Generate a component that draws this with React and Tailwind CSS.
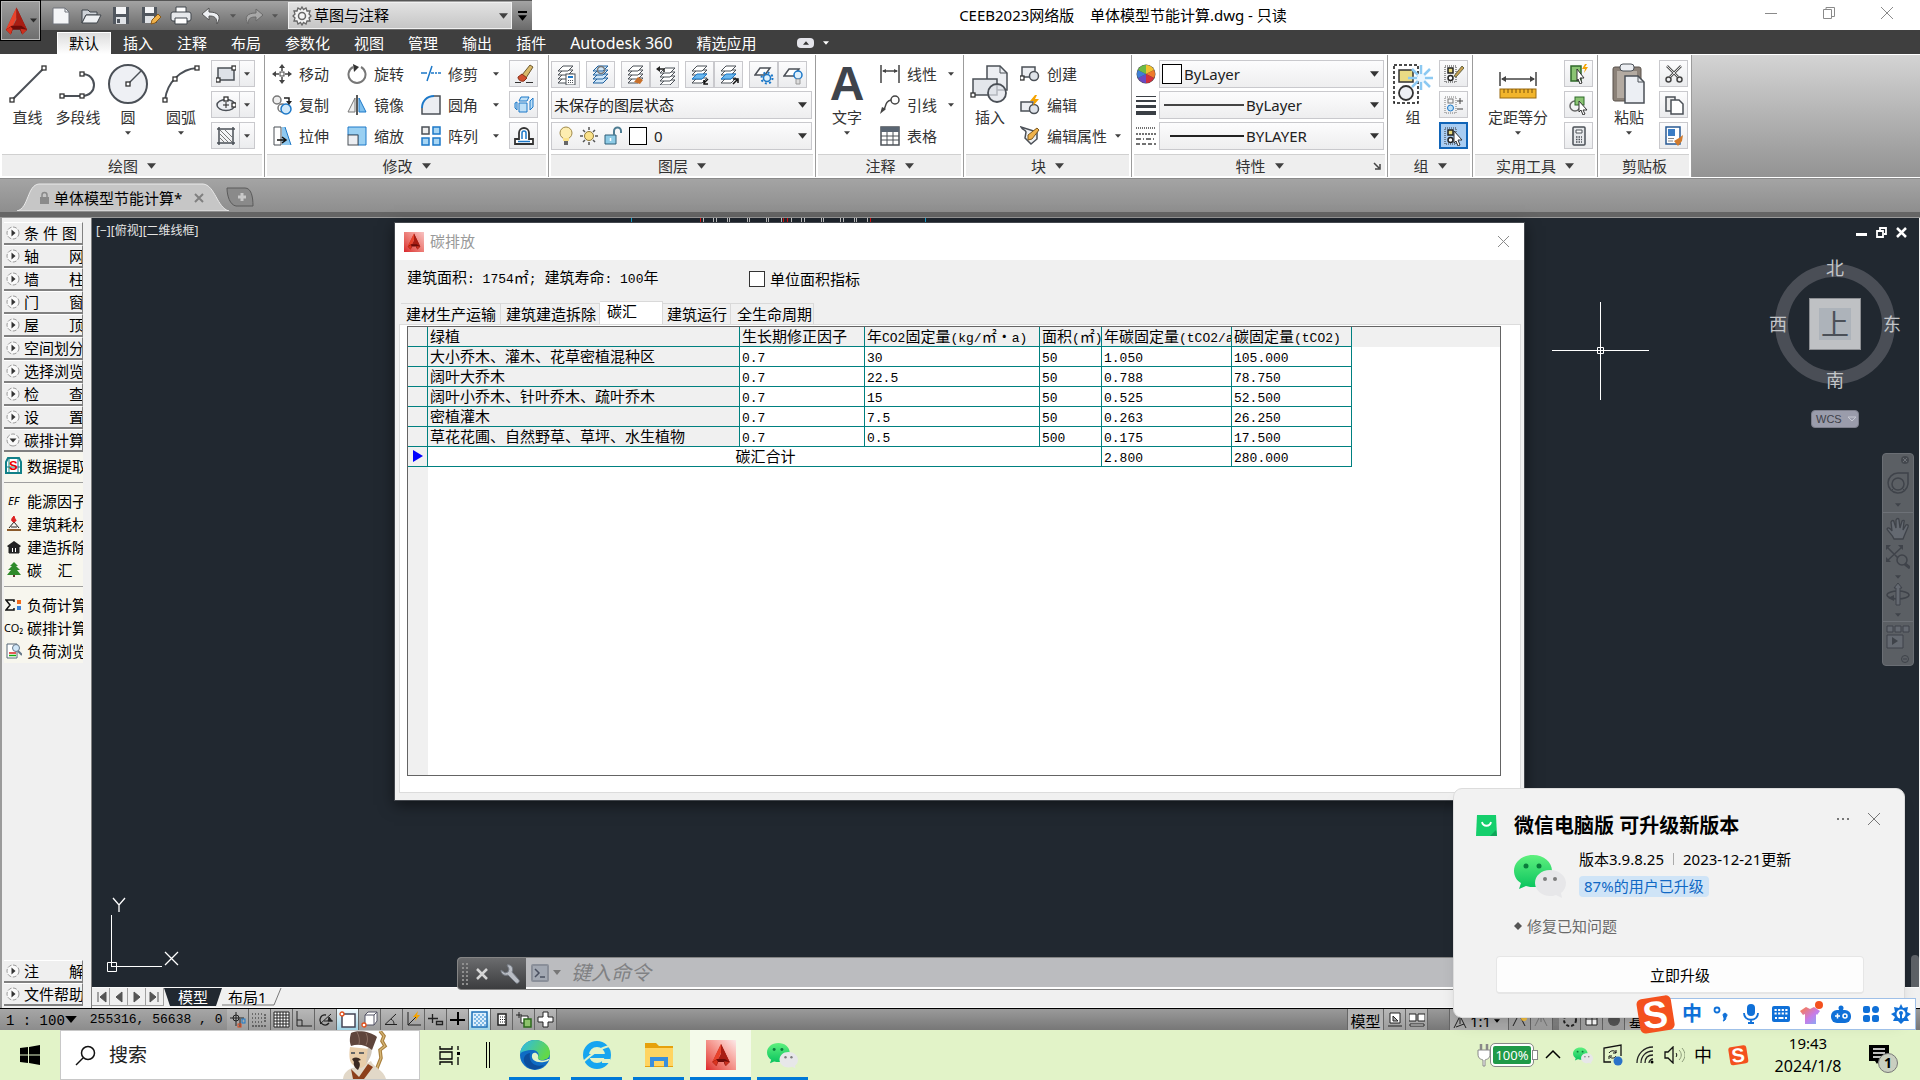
import React from "react";

const UI = "font-['Noto_Sans','Noto_Sans_CJK_SC',sans-serif]";
const MONO = "font-['Liberation_Mono','Noto_Sans_CJK_SC',monospace]";

function Svg({ w = 20, h, box, className = "", children }) {
  const hh = h || w;
  return (
    <svg width={w} height={hh} viewBox={box || `0 0 ${w} ${hh}`} fill="none" className={`shrink-0 ${className}`} aria-hidden="true">
      {children}
    </svg>
  );
}

function Caret({ w = 7, className = "text-[#404040]" }) {
  return (
    <svg width={w} height={Math.ceil(w / 2) + 1} viewBox="0 0 10 6" className={`shrink-0 ${className}`} aria-hidden="true">
      <path d="M0 0h10L5 6z" fill="currentColor" />
    </svg>
  );
}

/* Half-width runs are set in a mono face a step smaller than the ideographs. */
function Song({ t }) {
  return t.split(/([\x20-\x7e]+)/).map((p, i) =>
    /^[\x20-\x7e]+$/.test(p) ? (
      <span key={i} className="font-['Liberation_Mono',monospace] text-[13px] whitespace-pre">{p}</span>
    ) : (
      <span key={i} className="font-['Noto_Sans_CJK_SC',sans-serif]">{p}</span>
    )
  );
}

function AcadA({ w = 28, h = 30 }) {
  return (
    <Svg w={w} h={h} box="0 0 28 30">
      <path d="M14 1 3 24l6 4 5-27z" fill="#c32a1c" />
      <path d="M14 1 3 24l7-4 4-8z" fill="#e8432c" />
      <path d="M14 1l11 23-6 4-5-16z" fill="#8c120c" />
      <path d="M14 1v12l-4 8h9l6 3z" fill="#a81d13" />
      <path d="M9 20h10l6 4-5 5-2-5H10l-2 5-5-5z" fill="#6d0b08" />
      <path d="M3 24l5 5 2-6-2-2z" fill="#d8341f" />
      <path d="M25 24l-5 5-2-6z" fill="#c8301f" />
    </Svg>
  );
}

/* ---------- title bar ---------- */

const quick = [
  <Svg w={22} key="new"><path d="M3 3h12l4 4v12H3z" fill="#f4f5f7" stroke="#70757c" /><path d="M15 3v4h4" stroke="#70757c" /></Svg>,
  <Svg w={22} key="open"><path d="M2 5h6l2 2h7v3H6l-4 8z" fill="#cfd3d8" stroke="#3f444a" /><path d="M6 10h15l-4 8H2z" fill="#eef0f2" stroke="#3f444a" /></Svg>,
  <Svg w={22} key="save"><path d="M3 2h16v17H3z" fill="#50565e" /><path d="M6 2h10v7H6z" fill="#f4f5f7" /><path d="M6 12h10v7H6z" fill="#dfe2e6" /><path d="M7 14h3v4H7z" fill="#50565e" /></Svg>,
  <Svg w={22} key="saveas"><path d="M2 2h15v16H2z" fill="#50565e" /><path d="M5 2h9v6H5z" fill="#f4f5f7" /><path d="M5 11h9v7H5z" fill="#dfe2e6" /><path d="M11 19l1-4 6-6 3 3-6 6z" fill="#f0b24a" stroke="#8b5a18" /></Svg>,
  <Svg w={22} key="print"><path d="M6 2h10v6H6z" fill="#fff" stroke="#3f444a" /><rect x="1" y="7" width="20" height="9" rx="2" fill="#e6e8eb" stroke="#3f444a" /><path d="M5 13h12v6H5z" fill="#fff" stroke="#3f444a" /></Svg>,
  <Svg w={22} key="undo"><path d="M9 3 2 9l7 6v-4c5 0 8 1 8 8 5-8 1-12-8-12z" fill="#eef0f3" stroke="#555" /></Svg>,
];

function TitleBar() {
  return (
    <header className="relative flex h-[30px] bg-white">
      <div className="flex h-[30px] w-[532px] shrink-0 items-center border-t border-[#555] bg-gradient-to-b from-[#a3a3a3] to-[#6a6a6a] pl-[50px]">
        <div className="flex items-center gap-[8px]">
          {quick.map((q, i) => <button key={i} className="h-[22px] w-[22px]" aria-label="快速访问">{q}</button>)}
          <Caret w={6} className="text-[#555]" />
          <button aria-label="重做"><Svg w={20}><path d="M12 3l7 6-7 6v-4c-5 0-8 1-8 7-4-7-1-11 8-11z" fill="#a8a8a8" stroke="#6a6a6a" /></Svg></button>
          <Caret w={6} className="text-[#555]" />
        </div>
        <label className="relative ml-auto flex h-[27px] w-[224px] items-center border border-[#f0f0f0] bg-gradient-to-b from-[#e2e2e2] to-[#c6c6c6] pl-[3px]">
          <Svg w={20}><path d="M10 1l1.500 2.500L14 2l1 3 3 0-1 3 2 2-2 2 1 3h-3l-1 3-2.500-1.500L10 19l-1.500-2.500L6 18l-1-3H2l1-3-2-2 2-2-1-3h3l1-3 2.500 1.500z" fill="#f4f4f4" stroke="#666" strokeWidth="1.300" /><circle cx="10" cy="10" r="3.500" stroke="#666" strokeWidth="1.500" /></Svg>
          <select className="absolute inset-0 appearance-none bg-transparent pl-[25px] text-[15px] text-black outline-none" defaultValue="a" aria-label="工作空间"><option value="a">草图与注释</option></select>
          <Caret w={9} className="ml-auto mr-[3px] text-[#404040]" />
        </label>
        <button className="flex h-[28px] w-[20px] flex-col items-center justify-center gap-[2px] text-black" aria-label="自定义"><span className="h-[2px] w-[9px] bg-black" /><Caret w={9} className="text-black" /></button>
      </div>
      <h1 className="flex-1 self-center whitespace-pre pr-[28px] text-center text-[15px] leading-5 text-black">{"CEEB2023网络版    单体模型节能计算.dwg - 只读"}</h1>
      <div className="mr-[4px] flex w-[174px] shrink-0 pb-1 text-[#8a8a8a]">
        <button className="flex flex-1 items-center justify-center" aria-label="最小化"><Svg w={14}><path d="M1 7.500h12" stroke="currentColor" /></Svg></button>
        <button className="flex flex-1 items-center justify-center" aria-label="还原"><Svg w={14}><path d="M1.500 3.500h8v9h-8zM4 3V1.500h8.500v9H10" stroke="currentColor" /></Svg></button>
        <button className="flex flex-1 items-center justify-center" aria-label="关闭"><Svg w={14}><path d="M1 1l12 12M13 1 1 13" stroke="currentColor" /></Svg></button>
      </div>
      <button className="absolute left-0 top-0 z-10 flex h-[41px] w-[41px] items-center border border-black bg-gradient-to-b from-[#9d9d9d] to-[#6d6d6d] pl-[2px] shadow-[inset_0_0_0_1px_#b8b8b8]" aria-label="应用程序菜单">
        <AcadA w={27} h={30} />
        <Caret w={7} className="text-[#2b2b2b]" />
      </button>
    </header>
  );
}

/* ---------- ribbon ---------- */

const tabs = ["插入", "注释", "布局", "参数化", "视图", "管理", "输出", "插件", "Autodesk 360", "精选应用"];

function RibbonTabs() {
  return (
    <nav className="flex h-6 items-end bg-[#3f3f3f] pl-[57px] text-[15px] leading-[21px] text-white">
      <button className="h-[22px] border border-b-0 border-white bg-gradient-to-b from-[#dcdcdc] to-white px-[11px] text-black">默认</button>
      {tabs.map((t) => <button key={t} className={t.startsWith("A") ? "h-[22px] px-3 text-[16px]" : "h-[22px] px-3"}>{t}</button>)}
      <button className="ml-[29px] flex h-[22px] items-center gap-[9px]" aria-label="最小化功能区">
        <span className="flex h-[10px] w-[17px] items-center justify-center rounded-sm bg-[#e4e4ea]"><Caret w={6} className="rotate-180 text-[#333]" /></span>
        <Caret w={6} className="text-white" />
      </button>
    </nav>
  );
}

function Panel({ title, width, caret = true, launcher, children }) {
  return (
    <section className={`flex shrink-0 flex-col border-r border-[#9c9c9c] bg-white ${width}`}>
      <div className="flex flex-1 pt-[3px]">{children}</div>
      <div className="relative mx-[2px] mb-[1px] flex h-[22px] items-center justify-center gap-[9px] border-t border-[#d0d0d0] bg-[#eeeeee] text-[15px] leading-5 text-[#333]">
        {title}
        {caret && <Caret w={9} />}
        {launcher && <Svg w={8} className="absolute right-1"><path d="M1 1l5 5M7 2v5H2" stroke="#444" strokeWidth="1.500" /></Svg>}
      </div>
    </section>
  );
}

function Big({ icon, label, caret, className = "" }) {
  return (
    <button className={`flex shrink-0 flex-col items-center text-[15px] leading-5 whitespace-nowrap text-[#333] ${className}`}>
      <span className="flex h-[49px] items-center justify-center pt-[2px]">{icon}</span>
      <span>{label}</span>
      {caret && <Caret w={6} className="mt-[4px] text-[#404040]" />}
    </button>
  );
}

function Row({ icon, label, caret }) {
  return (
    <button className="flex h-[31px] items-center gap-[7px] text-[15px] leading-5 whitespace-nowrap text-[#333]">
      {icon}{label}{caret && <Caret w={6} className="ml-auto text-[#404040]" />}
    </button>
  );
}

const boxed = "flex h-[27px] items-center justify-center border border-[#c9c9cd] bg-gradient-to-b from-[#fcfcfd] to-[#ebecee]";

function Sq({ children, on, w = "w-[29px]", label }) {
  return <button aria-label={label} className={on ? `${w} flex h-[27px] items-center justify-center border-2 border-[#1165b8] bg-[#a9cdf2]` : `${boxed} ${w}`}>{children}</button>;
}

const node = (x, y) => <rect x={x - 2} y={y - 2} width="4" height="4" fill="#fff" stroke="#333" strokeWidth="1.300" key={x + "-" + y} />;

const G = "#4b5057";
const B = "#1c78c8";

const LayerBase = ({ c = "#fff", s = G }) => (
  <>
    <path d="M7 13h10l-5 5H2z" fill={c} stroke={s} />
    <path d="M7 9h10l-5 5H2z" fill={c} stroke={s} />
    <path d="M7 5h10l-5 5H2z" fill={c} stroke={s} />
    <path d="M7 1h10l-5 5H2z" fill={c} stroke={s} />
  </>
);

function Split({ children, label }) {
  return (
    <div className="flex">
      <Sq label={label}>{children}</Sq>
      <button aria-label={label + "选项"} className={`${boxed} -ml-px w-4`}><Caret w={6} /></button>
    </div>
  );
}

function Draw() {
  return (
    <Panel title="绘图" width="w-[265px]">
      <Big className="w-[55px]" label="直线" icon={<Svg w={40}><path d="M4 36 36 4" stroke={G} strokeWidth="2" />{node(4, 36)}{node(36, 4)}</Svg>} />
      <Big className="w-[46px]" label="多段线" icon={<Svg w={40}><path d="M4 32h20c16 0 16-22 0-22" stroke={G} strokeWidth="2" />{node(4, 32)}{node(24, 32)}{node(24, 10)}</Svg>} />
      <Big className="w-[54px]" label="圆" caret icon={<Svg w={42}><circle cx="21" cy="21" r="19" fill="#eef0f4" stroke={G} strokeWidth="2" /><path d="m21 21 13-13" stroke={G} strokeWidth="1.500" />{node(21, 21)}</Svg>} />
      <Big className="w-[52px]" label="圆弧" caret icon={<Svg w={40}><path d="M4 36C6 18 20 5 36 4" stroke={G} strokeWidth="2" />{node(4, 36)}{node(14, 15)}{node(36, 4)}</Svg>} />
      <div className="ml-[4px] flex flex-col gap-1 pt-[2px]">
        <Split label="矩形"><Svg w={20}><rect x="2" y="4" width="16" height="12" fill="#dde1e7" stroke={G} strokeWidth="1.500" />{node(2, 16)}{node(18, 4)}</Svg></Split>
        <Split label="椭圆"><Svg w={20}><ellipse cx="10" cy="10" rx="9" ry="5.500" fill="#eef0f4" stroke={G} strokeWidth="1.500" /><path d="M7 10h6M10 7v6" stroke="#222" />{node(18, 10)}{node(10, 4)}</Svg></Split>
        <Split label="图案填充"><Svg w={20}><path d="M1 3h18M1 17h18M3 1v18M17 1v18" stroke={G} strokeWidth="1.500" /><path d="m4 8 8 8M4 4l12 12M9 4l7 7M4 12l4 4" stroke="#777" /></Svg></Split>
      </div>
    </Panel>
  );
}

function Modify() {
  return (
    <Panel title="修改" width="w-[284px]">
      <div className="ml-[7px] flex w-[75px] flex-col">
        <Row label="移动" icon={<Svg><path d="M10 0l3 4H7zM10 20l3-4H7zM0 10l4-3v6zM20 10l-4-3v6z" fill="#444" /><path d="M10 3v4M10 13v4M3 10h4M13 10h4" stroke="#444" strokeWidth="1.500" /><rect x="8" y="8" width="4" height="4" stroke="#444" /></Svg>} />
        <Row label="复制" icon={<Svg><circle cx="5" cy="5" r="4" stroke="#777" strokeWidth="1.500" fill="#eee" /><circle cx="10" cy="13" r="4" stroke="#777" strokeWidth="1.500" fill="#fff" /><circle cx="14" cy="14" r="5" stroke={B} strokeWidth="1.500" fill="#cfe8fa" /><path d="M12 3h5v4" stroke="#222" strokeWidth="1.500" /><path d="M14 6h6l-3 4z" fill="#222" /></Svg>} />
        <Row label="拉伸" icon={<Svg><path d="M2 1h7v18H2z" fill="#fff" stroke={G} /><path d="M10 1h3l6 18h-9z" fill="#8fc8ef" /><path d="M13 1l6 18" stroke={B} /><path d="M5 14h8M10 11l4 3-4 3" stroke="#111" strokeWidth="1.500" /></Svg>} />
      </div>
      <div className="flex w-[74px] flex-col">
        <Row label="旋转" icon={<Svg><path d="M6 3a8.500 8.500 0 1 0 8 0" stroke="#777" strokeWidth="2" /><path d="M6 0l6 3-5 5z" fill="#333" /></Svg>} />
        <Row label="镜像" icon={<Svg><path d="M8 3v14H1z" fill="#eee" stroke="#777" /><path d="M12 3v14h7z" fill="#7fc0ee" stroke={B} /><path d="M10 0v20" stroke="#222" strokeWidth="1.500" /></Svg>} />
        <Row label="缩放" icon={<Svg><path d="M1 1h18v18h-8V9H1z" fill="#9ad0f2" stroke={B} /><rect x="1" y="9" width="10" height="10" fill="#eceef2" stroke={G} /></Svg>} />
      </div>
      <div className="flex w-[78px] flex-col">
        <Row label="修剪" caret icon={<Svg><path d="M0 9h6M10 9h3M14 9h2M17 9h3" stroke={B} strokeWidth="1.500" /><path d="M11 2 6 17" stroke={B} strokeWidth="1.500" /></Svg>} />
        <Row label="圆角" caret icon={<Svg><path d="M19 19H1V11C2 4 7 1 13 1h6z" fill="#eceef2" /><path d="M13 1h6v18H1v-6" stroke={G} strokeWidth="1.500" /><path d="M1 13C1 6 6 1 13 1" stroke={B} strokeWidth="2" /></Svg>} />
        <Row label="阵列" caret icon={<Svg><rect x="1" y="1" width="7" height="7" fill="#eee" stroke={G} strokeWidth="1.500" /><g fill="#a8d6f4" stroke={B} strokeWidth="1.500"><rect x="12" y="1" width="7" height="7" /><rect x="1" y="12" width="7" height="7" /><rect x="12" y="12" width="7" height="7" /></g></Svg>} />
      </div>
      <div className="ml-[10px] flex flex-col gap-1 pt-[2px]">
        <Sq label="删除"><Svg><path d="M8 11 16 1l3 2-7 11z" fill="#d9b96a" stroke="#6e5a30" /><path d="M4 13l4-3 5 4-3 3c-3 1-6-1-6-4z" fill="#d1502f" stroke="#8a3018" /><path d="M1 18.500h6M12 18.500h7" stroke="#333" /></Svg></Sq>
        <Sq label="分解"><Svg><g fill="#bfe0f7" stroke={B}><path d="M5 8h8v9H5zM7 2h8l-2 4H5z" /><path d="M16 6l3-3v9l-3 3zM1 8l2-1v8l-2-2z" /></g></Svg></Sq>
        <Sq label="偏移"><Svg><path d="M1 18h18v-5h-4V7a5 5 0 0 0-10 0v6H1z" fill="#fff" stroke="#333" strokeWidth="1.800" /><path d="M4 15.500h12" stroke={B} strokeWidth="1.500" /><path d="M8 13V7a2 2 0 0 1 4 0v6" stroke={B} strokeWidth="1.500" /></Svg></Sq>
      </div>
    </Panel>
  );
}

function Select({ value, label, pre = "pl-2", children, className = "" }) {
  return (
    <label className={`relative flex h-[28px] items-center border border-[#c9c9cd] bg-gradient-to-b from-[#fcfcfd] to-[#eeeeef] ${className}`}>
      {children}
      <select aria-label={label} defaultValue="v" className={`absolute inset-0 w-full appearance-none bg-transparent text-[15px] text-[#222] outline-none ${pre}`}><option value="v">{value}</option></select>
      <Caret w={9} className="ml-auto mr-[4px] text-[#333]" />
    </label>
  );
}

function Layers() {
  return (
    <Panel title="图层" width="w-[267px]">
      <div className="ml-[2px] flex w-[261px] flex-col gap-[3px] pt-[3px]">
        <div className="flex gap-[6px]">
          <Sq label="图层特性"><Svg><LayerBase /><rect x="10" y="9" width="9" height="11" fill="#fff" stroke={G} /><path d="M12 11h5v2h-5z" fill={B} /><path d="M12 15.500h5M12 17.500h5" stroke={G} strokeDasharray="1 1" /></Svg></Sq>
          <Sq label="图层匹配"><Svg><LayerBase c="#cfe6f8" s="#1d5f9c" /><circle cx="10" cy="5" r="3.500" stroke="#777" strokeWidth="1.500" /></Svg></Sq>
          <div className="flex">
            <Sq label="置为当前"><Svg><LayerBase /><path d="M12 12l5 3-3 4-6-2z" fill="#c8702a" /></Svg></Sq>
            <Sq label="上一个"><Svg><g transform="translate(3 2)"><LayerBase /></g><path d="M2 4h7v3" stroke="#222" strokeWidth="1.500" /><path d="M5 1v6L1 4z" fill="#222" /></Svg></Sq>
          </div>
          <div className="flex">
            <Sq label="隔离"><Svg><LayerBase /><path d="M7 9h10l-5 5H2z" fill="#6cb8ee" stroke={B} /><path d="m18 14-4 4M14 15v4h4" stroke="#111" strokeWidth="1.500" /></Svg></Sq>
            <Sq label="取消隔离"><Svg><LayerBase /><path d="M7 9h10l-5 5H2z" fill="#6cb8ee" stroke={B} /><path d="m14 19 4-4M14 14h5v4" stroke="#111" strokeWidth="1.500" /></Svg></Sq>
          </div>
          <div className="flex">
            <Sq label="冻结"><Svg><path d="M6 3h10l-5 7H1z" fill="#fff" stroke={G} strokeWidth="1.500" /><circle cx="13" cy="13" r="3.500" fill="#dff0fb" stroke={B} strokeWidth="1.500" /><circle cx="13" cy="13" r="5.500" stroke={B} strokeWidth="2" strokeDasharray="2 2.300" /></Svg></Sq>
            <Sq label="关闭图层"><Svg><path d="M6 4h10l-5 7H1z" fill="#fff" stroke={G} strokeWidth="1.500" /><circle cx="15" cy="10" r="4" fill="#dff0fb" stroke={B} strokeWidth="1.500" /><path d="M13 14h4v5h-4z" fill="#ddd" stroke="#999" /></Svg></Sq>
          </div>
        </div>
        <Select label="图层状态" value="未保存的图层状态" pre="pl-[2px]" />
        <Select label="图层" value="0" pre="pl-[102px]">
          <span className="flex items-center gap-[6px] pl-[6px]">
            <Svg w={16} h={20}><circle cx="8" cy="7" r="6" fill="#fdedb0" stroke="#a08a4a" /><path d="M5 12h6v3H5z" fill="#fbe28a" /><path d="M6 15h4v4H6z" fill="#666" /></Svg>
            <Svg w={18}><circle cx="9" cy="9" r="4.500" fill="#fbe28a" stroke="#8f7a3a" /><path d="M9 0v3M9 15v3M0 9h3M15 9h3M3 3l2 2M13 13l2 2M15 3l-2 2M3 15l2-2" stroke="#555" strokeWidth="1.500" /></Svg>
            <Svg w={19} h={20}><path d="M1 9h11v9H1z" fill="#8ecbe6" stroke="#2f5f78" /><path d="M10 9V5a3.500 3.500 0 0 1 7 0v2" stroke="#4d7c92" strokeWidth="2" /><path d="M6.500 12v3" stroke="#fff" strokeWidth="1.500" /></Svg>
            <span className="h-[18px] w-[18px] border border-black bg-white" />
          </span>
        </Select>
      </div>
    </Panel>
  );
}

function Annotate() {
  return (
    <Panel title="注释" width="w-[148px]">
      <Big className="ml-[3px] w-[56px]" label="文字" caret icon={<span className="font-['Liberation_Sans',sans-serif] text-[48px] leading-[42px] font-bold text-[#3f444c]">A</span>} />
      <div className="ml-[5px] flex w-[74px] flex-col">
        <Row label="线性" caret icon={<Svg><path d="M1 1v18M19 1v18" stroke="#444" strokeWidth="1.500" /><path d="M3 7h14" stroke="#444" strokeWidth="1.500" /><path d="M2 7l4-2v4zM18 7l-4-2v4z" fill="#444" /></Svg>} />
        <Row label="引线" caret icon={<Svg><circle cx="15" cy="5" r="4" stroke="#444" strokeWidth="1.500" /><path d="M11 5C6 6 6 10 4 15" stroke="#444" strokeWidth="1.500" /><path d="M0 19l2-7 4 2z" fill="#444" /></Svg>} />
        <Row label="表格" icon={<Svg><rect x="1" y="1" width="18" height="18" fill="#fff" stroke={G} strokeWidth="1.500" /><path d="M1 1h18v5H1z" fill="#5a6572" /><path d="M1 10h18M1 14h18M7 6v13M13 6v13" stroke={G} /></Svg>} />
      </div>
    </Panel>
  );
}

function Block() {
  return (
    <Panel title="块" width="w-[168px]">
      <Big className="ml-[4px] w-[44px]" label="插入" icon={<Svg w={40}><path d="M17 2h13l7 7v17H17z" fill="#eceef2" stroke={G} strokeWidth="1.500" /><path d="M30 2v7h7" stroke={G} /><path d="M3 15h24v16H3z" fill="#e3e6eb" stroke={G} strokeWidth="1.500" /><circle cx="27" cy="29" r="9" stroke={G} strokeWidth="1.800" fill="#dfe3e9" fillOpacity=".7" />{node(3, 31)}</Svg>} />
      <div className="ml-[8px] flex w-[101px] flex-col">
        <Row label="创建" icon={<Svg><rect x="2" y="3" width="13" height="10" fill="#eceef2" stroke={G} strokeWidth="1.500" /><circle cx="14" cy="12" r="4.500" fill="#dfe3e9" stroke={G} strokeWidth="1.500" />{node(2, 14)}</Svg>} />
        <Row label="编辑" icon={<Svg><rect x="1" y="7" width="12" height="9" fill="#eceef2" stroke={G} strokeWidth="1.500" /><circle cx="14" cy="14" r="4.500" fill="#dfe3e9" stroke={G} strokeWidth="1.500" /><path d="m15 0-5 6h4l-1 5 6-7h-4l2-4z" fill="#f5a300" /></Svg>} />
        <Row label="编辑属性" caret icon={<Svg><path d="M1 1c2 4 4 2 5 5l-1 6 6 6 6-5V6z" fill="#eef0f2" stroke={G} strokeWidth="1.500" /><path d="m8 9 9-7 2 2-7 9-4 1z" fill="#f0b24a" stroke="#7d5a20" /></Svg>} />
      </div>
    </Panel>
  );
}

function Props() {
  return (
    <Panel title="特性" width="w-[256px]" launcher>
      <div className="ml-[4px] flex w-[248px] flex-col gap-[3px] pt-[2px]">
        <div className="flex items-center gap-[3px]">
          <Svg><circle cx="10" cy="10" r="9.500" fill="#444" /><path d="M10 10V1a9 9 0 0 1 8 5z" fill="#f2c12e" /><path d="M10 10l8-4a9 9 0 0 1 0 8z" fill="#ee7a2b" /><path d="M10 10l8 4a9 9 0 0 1-8 5z" fill="#d22f3c" /><path d="M10 10v9a9 9 0 0 1-8-5z" fill="#6a4ac2" /><path d="M10 10l-8 4a9 9 0 0 1 0-8z" fill="#3f7fd6" /><path d="M10 10L2 6a9 9 0 0 1 8-5z" fill="#6dbb45" /></Svg>
          <Select label="颜色" value="ByLayer" className="flex-1" pre="pl-[24px]"><span className="ml-[2px] h-5 w-5 border border-black bg-white" /></Select>
        </div>
        <div className="flex items-center gap-[3px]">
          <Svg><path d="M0 1h20v1H0zM0 5h20v2H0zM0 10h20v3H0zM0 16h20v4H0z" fill="#3a3f45" /></Svg>
          <Select label="线宽" value="ByLayer" className="flex-1" pre="pl-[86px]"><span className="ml-[4px] h-[2px] w-[80px] bg-[#444]" /></Select>
        </div>
        <div className="flex items-center gap-[3px]">
          <Svg><path d="M0 2h20" stroke="#444" strokeWidth="1.500" strokeDasharray="1 1" /><path d="M0 8h20" stroke="#444" strokeWidth="1.500" strokeDasharray="2 1" /><path d="M0 13h20" stroke="#444" strokeWidth="1.500" strokeDasharray="5 2 1 2" /><path d="M0 18h20" stroke="#444" strokeWidth="1.500" strokeDasharray="4 2" /></Svg>
          <Select label="线型" value="BYLAYER" className="flex-1" pre="pl-[86px]"><span className="ml-[10px] h-[2px] w-[74px] bg-[#222]" /></Select>
        </div>
      </div>
    </Panel>
  );
}

const GroupGlyph = () => <><rect x="1" y="2" width="11" height="16" stroke="#333" strokeDasharray="1 1" /><rect x="4" y="4" width="5" height="5" fill="#e9d979" stroke="#222" strokeWidth="1.500" /><circle cx="6.500" cy="14" r="2.500" fill="#fff" stroke="#222" strokeWidth="1.500" /></>;

function RightPanels() {
  return (
    <>
      <Panel title="组" width="w-[85px]">
        <Big className="ml-[4px] w-[44px] pr-[2px]" label="组" icon={<Svg w={42}><rect x="2" y="2" width="24" height="38" stroke="#111" strokeWidth="1.500" strokeDasharray="3 2" /><rect x="7" y="7" width="14" height="12" fill="#eadb84" stroke="#333" strokeWidth="1.500" /><circle cx="14" cy="30" r="7" fill="#eef0f4" stroke="#333" strokeWidth="1.800" /><path d="M29 2v10M29 18v9M16 15h10M32 15h9M20 6l6 6M38 6l-6 6M20 24l6-6M38 24l-6-6" stroke="#8cc9f2" strokeWidth="2.500" /><circle cx="29" cy="15" r="4" fill="#eaf6ff" /></Svg>} />
        <div className="ml-[3px] flex flex-col gap-1 pt-[2px]">
          <Sq label="编辑组"><Svg><GroupGlyph /><path d="M10 12 18 2l2 2-8 9z" fill="#c8a050" stroke="#664" /></Svg></Sq>
          <Sq label="组编辑"><Svg><rect x="1" y="2" width="11" height="16" stroke="#777" strokeDasharray="1 1" /><rect x="4" y="4" width="5" height="4" stroke="#777" /><circle cx="6.500" cy="13" r="3" fill="#bfe0f7" stroke={B} /><path d="M13 6h6M16 3v6M13 14h6" stroke="#444" /></Svg></Sq>
          <Sq label="组选择" on><Svg><GroupGlyph /><path d="m10 5 8 9h-4l2 5-2 1-2-5-2 2z" fill="#fff" stroke="#333" /></Svg></Sq>
        </div>
      </Panel>
      <Panel title="实用工具" width="w-[125px]">
        <Big className="ml-[13px] w-[64px]" label="定距等分" caret icon={<Svg w={38} h={40}><path d="M1 8v14M37 8v14M3 15h32" stroke="#444" strokeWidth="1.500" /><path d="M2 15l5-3v6zM36 15l-5-3v6z" fill="#444" /><rect x="1" y="25" width="36" height="9" fill="#f2b52c" stroke="#9a6a10" /><path d="M5 25v4M9 25v4M13 25v4M17 25v4M21 25v4M25 25v4M29 25v4M33 25v4" stroke="#7a520c" /></Svg>} />
        <div className="ml-[14px] flex flex-col gap-1 pt-[2px]">
          <Sq label="快速选择"><Svg><rect x="2" y="2" width="10" height="15" fill="#8bc474" stroke="#2f6a2a" strokeWidth="1.500" /><path d="m8 5 7 9h-4l2 5-2 1-2-5-1 2z" fill="#fff" stroke="#333" /><path d="m16 0-3 5h3l-1 4 4-6h-3l2-3z" fill="#f5a300" /></Svg></Sq>
          <Sq label="全部选择"><Svg><circle cx="6" cy="11" r="5" stroke="#666" strokeWidth="1.500" /><rect x="6" y="2" width="9" height="8" fill="#8bc474" stroke="#2f6a2a" /><path d="m10 6 8 9h-4l2 4-2 1-2-5-2 2z" fill="#fff" stroke="#333" /></Svg></Sq>
          <Sq label="计算器"><Svg><rect x="4" y="1" width="12" height="18" rx="1" fill="#e7e9ec" stroke={G} strokeWidth="1.500" /><path d="M7 4h6v3H7z" fill="#fff" stroke={G} /><path d="M7 11h6M7 13.500h6M7 16h6" stroke={G} strokeWidth="1.500" strokeDasharray="1.500 1" /></Svg></Sq>
        </div>
      </Panel>
      <Panel title="剪贴板" width="w-[94px]" caret={false}>
        <Big className="ml-[8px] w-[46px]" label="粘贴" caret icon={<Svg w={36} h={42}><rect x="2" y="4" width="28" height="34" rx="2" fill="#8b8178" stroke="#5a534d" /><rect x="6" y="8" width="20" height="27" fill="#b3aaa1" /><rect x="9" y="1" width="14" height="7" rx="3" fill="#eceef2" stroke={G} /><path d="M14 13h13l6 6v21H14z" fill="#eceff4" stroke={G} strokeWidth="1.500" /><path d="M27 13v6h6" stroke={G} /></Svg>} />
        <div className="ml-[7px] flex flex-col gap-1 pt-[2px]">
          <Sq label="剪切"><Svg><path d="M3 2l11 11M17 2 6 13" stroke="#555" strokeWidth="2.500" /><path d="M3 2l11 11M17 2 6 13" stroke="#ddd" /><circle cx="4.500" cy="15.500" r="2.500" stroke="#444" strokeWidth="1.500" /><circle cx="15.500" cy="15.500" r="2.500" stroke="#444" strokeWidth="1.500" /></Svg></Sq>
          <Sq label="复制剪裁"><Svg><path d="M2 2h9v14H2z" fill="#eee" stroke={G} strokeWidth="1.500" /><path d="M7 5h8l4 4v10H7z" fill="#fff" stroke={G} strokeWidth="1.500" /></Svg></Sq>
          <Sq label="特性匹配"><Svg><rect x="2" y="1" width="14" height="17" fill="#fff" stroke="#285a94" strokeWidth="1.500" /><path d="M4 3h7v7H4z" fill="#3a7cc4" /><path d="M4 12.500h6M4 15h5" stroke="#888" /><path d="m19 9-4 3-5 3 4 5 4-5z" fill="#d07a2c" /></Svg></Sq>
        </div>
      </Panel>
    </>
  );
}

function Ribbon() {
  return (
    <div className="flex h-[124px] border-y border-white bg-gradient-to-b from-[#d4d4d4] to-[#939393]">
      <Draw /><Modify /><Layers /><Annotate /><Block /><Props /><RightPanels />
    </div>
  );
}

function FileTabs() {
  return (
    <div className="flex h-[34px] items-end border-t border-[#8a8a8a] bg-gradient-to-b from-[#a4a4a4] to-[#8e8e8e] pb-px pl-[17px]">
      <div className="relative flex h-7 w-[212px] items-center text-[15px] leading-5 text-black">
        <svg className="absolute inset-0 h-full w-full" viewBox="0 0 212 28" preserveAspectRatio="none" aria-hidden="true">
          <path d="M0 28c12-3 10-26 22-27h164c12 1 14 24 26 27z" fill="#c6c6c6" stroke="#e9e9e9" />
        </svg>
        <span className="relative flex w-full items-center gap-[4px] pt-px pl-[22px]">
          <Svg w={11} h={13}><path d="M1 6h9v7H1z" fill="#8a8a8a" /><path d="M3 6V4a2.500 2.500 0 0 1 5 0v2" stroke="#8a8a8a" strokeWidth="1.500" /></Svg>
          单体模型节能计算*
          <button className="ml-[8px]" aria-label="关闭标签"><Svg w={10}><path d="m1 1 8 8M9 1 1 9" stroke="#808080" strokeWidth="2" /></Svg></button>
        </span>
      </div>
      <button className="mb-[4px] -ml-[3px]" aria-label="新建标签"><Svg w={28} h={20}><path d="M1 1h18c6 0 8 8 8 18H10C4 18 1 9 1 1z" fill="#8a8a8a" stroke="#5b5b5b" /><path d="M12 10h8M16 6v8" stroke="#c8c8c8" strokeWidth="3" /></Svg></button>
    </div>
  );
}

/* ---------- sidebar ---------- */

function SideButton({ label, open }) {
  const parts = label.split(" ");
  return (
    <button className="flex h-[23px] w-full items-center overflow-hidden border-b-2 border-b-[#808080] border-r border-r-[#808080] border-t border-t-white bg-[#efefef] pl-[2px] text-[15px] leading-5 text-black">
      <Svg w={14} className={open ? "rotate-90" : ""}><circle cx="7" cy="7" r="6" fill="#fafafa" stroke="#999" strokeDasharray="4 1.500" /><path d="M5.500 3.500v7l4-3.500z" fill="#333" /></Svg>
      <span className={`ml-[4px] flex shrink-0 justify-between ${parts.length === 3 ? "w-[53px]" : "w-[60px]"}`}>{parts.map((c, i) => <span key={i}>{c}</span>)}</span>
    </button>
  );
}

function SideItem({ icon, label }) {
  return (
    <button className="flex h-[23px] w-full items-center gap-[5px] overflow-hidden pl-[1px] text-[15px] leading-5 whitespace-pre text-black">
      <span className="flex w-[17px] shrink-0 justify-center">{icon}</span>{label}
    </button>
  );
}

const Rule = () => <hr className="mt-[5px] mb-[6px] border-t border-[#a0a0a0]" />;

function Sidebar() {
  return (
    <aside className="flex w-[91px] shrink-0 flex-col border-l-2 border-[#9b9b9b] bg-[#f0f0f0] pl-[2px]">
      <div className="flex flex-1 flex-col pt-[4px] pr-[8px]">
        {["条 件 图", "轴 网", "墙 柱", "门 窗", "屋 顶", "空间划分", "选择浏览", "检 查", "设 置"].map((s) => <SideButton key={s} label={s} />)}
        <SideButton label="碳排计算" open />
        <div className="bg-[#f7f6ee] pt-[2px] pb-[1px]">
          <SideItem label="数据提取" icon={<Svg w={17}><path d="M3 1h11l2 4v11H1V5z" fill="#fff" stroke="#118088" strokeWidth="2" /><path d="M4 2v14M13 2v14M0 10h17" stroke="#118088" /><text x="4" y="13" fontSize="13" fontWeight="bold" fontFamily="Liberation Sans" fill="#e00">S</text></Svg>} />
          <Rule />
          <SideItem label="能源因子" icon={<span className="text-[11px] italic text-black">EF</span>} />
          <SideItem label="建筑耗材" icon={<Svg w={16}><path d="M1 13h14v2H1z" fill="#8b5a2b" /><path d="m3 12 5-6 5 6M5 11h6" stroke="#222" /><path d="M8 0c-4 4-2 5-1 6 3 0 4-2 2-3z" fill="#d22" stroke="#d22" /></Svg>} />
          <SideItem label="建造拆除" icon={<Svg w={16}><path d="M8 2 1 7l1 1h12l1-1z" fill="#222" /><path d="M3 8h10v6H3z" fill="#222" stroke="#222" /><path d="M6 9h1v4H6zM9 9h1v4H9z" fill="#fff" /></Svg>} />
          <SideItem label="碳    汇" icon={<Svg w={16}><path d="M8 0 4 4h2l-4 4h3l-4 5h14l-4-5h3l-4-4h2z" fill="#2f8a2a" /><path d="M7 13h2v2H7z" fill="#633" /></Svg>} />
          <Rule />
          <SideItem label="负荷计算" icon={<Svg w={17} h={12}><path d="M9 3V1H1l4 5-4 5h8V9" stroke="#111" strokeWidth="1.500" /><path d="M12 1h4v4h-4z" fill="#f26a1b" /><path d="M12 7h4v4h-4z" fill="#3b82d8" /></Svg>} />
          <SideItem label="碳排计算" icon={<span className="text-[11px]">CO₂</span>} />
          <SideItem label="负荷浏览" icon={<Svg w={16}><path d="M1 1h10v14H1z" fill="#fff" stroke="#567" /><path d="M3 10h7" stroke="#d22" strokeWidth="1.500" /><path d="M3 12.500h7" stroke="#1a1" strokeWidth="1.500" /><circle cx="10" cy="5" r="3.500" fill="#cfe6f8" stroke="#678" /><path d="m12 8 4 4" stroke="#678" strokeWidth="2" /></Svg>} />
        </div>
        <div className="mt-auto pb-[2px]">
          <SideButton label="注 解" />
          <SideButton label="文件帮助" />
        </div>
      </div>
    </aside>
  );
}

/* ---------- drawing area ---------- */

function Cube() {
  return (
    <div className="absolute right-[18px] top-[40px] grid h-[132px] w-[132px] grid-cols-3 grid-rows-3 place-items-center text-[18px] leading-5 text-[#c3c5c8]">
      <span className="absolute inset-[6px] rounded-full border-[13px] border-[#4a4e56]" />
      <span className="relative col-start-2 row-start-1 self-start">北</span>
      <span className="relative col-start-1 row-start-2 justify-self-start">西</span>
      <span className="relative col-start-2 row-start-2 flex h-[52px] w-[52px] items-center justify-center border border-[#8c8e92] bg-[#bfc1c4]"><span className="flex h-8 w-8 items-center justify-center bg-[#adb3ba] text-[28px] leading-8 text-[#4b5058]">上</span></span>
      <span className="relative col-start-3 row-start-2 justify-self-end">东</span>
      <span className="relative col-start-2 row-start-3 self-end">南</span>
    </div>
  );
}

function NavBar() {
  return (
    <div className="absolute right-[5px] top-[235px] flex h-[213px] w-[32px] flex-col items-center rounded border border-[#6a6e74] bg-[#5b5f64] py-[2px] text-[#3f434a]">
      <Svg w={8} className="mr-1 self-end"><circle cx="4" cy="4" r="4" fill="#44484e" /><path d="m2 2 4 4M6 2 2 6" stroke="#6d7177" /></Svg>
      <Svg w={24} className="mt-2"><path d="M12 1h10v11a10 10 0 1 1-10-11z" stroke="currentColor" strokeWidth="1.500" /><circle cx="12" cy="12" r="6" stroke="currentColor" strokeWidth="1.500" /><path d="m8 16-3 3M16 16l3 3" stroke="currentColor" /></Svg>
      <Caret w={6} className="mt-[7px]" />
      <span className="mt-[5px] h-px w-full bg-[#6d7177]" />
      <Svg w={24} className="mt-[4px]"><path d="M8 22C6 17 3 16 1 12c1-2 3-1 5 2L5 5c1-2 3-2 3 0l2 6V3c1-2 3-2 3 0l1 8 2-7c1-1 3-1 2 1l-1 8 3-5c1-1 3 0 2 2l-3 7-2 5z" fill="#646971" stroke="currentColor" strokeWidth="1.300" /></Svg>
      <Svg w={24} className="mt-1"><path d="m1 2 13 13M16 2 1 16" stroke="currentColor" strokeWidth="1.500" /><path d="M0 0h5L0 5zM17 0v5l-5-5zM0 17v-5l5 5z" fill="currentColor" /><circle cx="16" cy="15" r="5" fill="#5b5f64" stroke="currentColor" strokeWidth="1.500" /><path d="m19 19 5 4" stroke="currentColor" strokeWidth="3" /></Svg>
      <Caret w={6} className="mt-[6px]" />
      <Svg w={24} className="mt-1"><ellipse cx="12" cy="12" rx="11" ry="4" stroke="currentColor" strokeWidth="1.500" /><path d="M12 0 8 5h2v17h4V5h2z" fill="#646971" stroke="currentColor" /><path d="m2 15 6-3v6z" fill="currentColor" /></Svg>
      <Caret w={6} className="mt-[6px]" />
      <span className="mt-[4px] h-px w-full bg-[#6d7177]" />
      <Svg w={24} className="mt-[3px]"><path d="M1 1h6v6H1zM9 1h6v6H9zM17 1h6v6h-6zM1 10h16v13H1z" fill="#646971" stroke="currentColor" /><path d="m6 12 6 4-6 4z" fill="currentColor" /></Svg>
      <Svg w={8} className="mr-1 mt-auto self-end"><circle cx="4" cy="4" r="3.500" stroke="#3f434a" /><path d="M2 4h4" stroke="#3f434a" /></Svg>
    </div>
  );
}

const ticks = [[539, "#18a8d8"], [608, "#e01010"], [611, "#ccc"], [621, "#ccc"], [624, "#ccc"], [635, "#ccc"], [637, "#ccc"], [655, "#ccc"], [657, "#ccc"], [674, "#ccc"], [676, "#ccc"], [689, "#ccc"], [691, "#e01010"], [695, "#e01010"], [699, "#ccc"], [709, "#ccc"], [712, "#ccc"], [729, "#ccc"], [731, "#ccc"], [748, "#ccc"], [751, "#ccc"], [762, "#ccc"], [764, "#ccc"], [775, "#ccc"], [778, "#e01010"], [833, "#18a8d8"]];

function Canvas() {
  return (
    <div className="relative flex-1 bg-[#212830]">
      <svg className="absolute left-0 top-0" width="840" height="4" aria-hidden="true">{ticks.map(([x, c]) => <path key={x} d={`M${x + 0.5} 0v4`} stroke={c} />)}</svg>
      <p className="absolute left-1 top-[3px] text-[12px] leading-5 text-[#e4e4e4]">[−][俯视][二维线框]</p>
      <svg className="absolute right-[270px] top-[84px]" width="97" height="98" viewBox="0 0 97 98" fill="none" stroke="#fff" aria-hidden="true"><path d="M0 48.500h97M48.500 0v98M45.500 45.500h6v6h-6z" /></svg>
      <div className="absolute right-[12px] top-[9px] flex items-center gap-[9px] text-white">
        <Svg w={11}><path d="M0 6h11v3H0z" fill="currentColor" /></Svg>
        <Svg w={11}><path d="M1 4h6v6H1zM4 3V1h6v6H8" stroke="currentColor" strokeWidth="1.800" /></Svg>
        <Svg w={11}><path d="m1 1 9 9M10 1 1 10" stroke="currentColor" strokeWidth="2.500" /></Svg>
      </div>
      <Cube />
      <button className="absolute right-[60px] top-[192px] flex h-[18px] w-[48px] items-center gap-[6px] rounded border border-[#7c7e8b] bg-[#9a9cab] pl-[4px] font-['Liberation_Sans',sans-serif] text-[11px] leading-4 text-[#3d4048]">WCS<Svg w={8} h={6}><path d="M0 1h8L4 5z" stroke="#c6c8d2" /></Svg></button>
      <NavBar />
      <svg className="absolute bottom-[15px] left-[13px]" width="80" height="76" fill="none" stroke="#fff" aria-hidden="true"><path d="M6.500 66V19M11 70.500h46M2.500 66.500h9v9h-9zM6.500 66v5M6 70.500h5" /><path d="m8 2 6 7 6-7M14 9v7M60 56l13 13M73 56 60 69" strokeWidth="1.300" /></svg>
      <span className="absolute right-0 bottom-0 h-8 w-2 rounded-t bg-[#5d6166]" />
      <div className="absolute bottom-[-3px] left-[365px] right-[24px] z-10 flex h-[33px] overflow-hidden rounded border border-[#858585] bg-[#bbbcbf]">
        <div className="flex w-[68px] items-center bg-gradient-to-b from-[#6b6c6e] to-[#3c3d3f] pl-[4px]">
          <Svg w={7} h={22}><path d="M1 0v22M5 0v22" stroke="#8f8f8f" strokeWidth="2" strokeDasharray="2 2" /></Svg>
          <button className="ml-[7px]" aria-label="关闭命令行"><Svg w={12}><path d="m1 1 10 10M11 1 1 11" stroke="#d6d6d6" strokeWidth="2.500" /></Svg></button>
          <button className="ml-[12px]" aria-label="自定义命令行"><Svg w={20}><path d="M7 1c4-1 7 3 5 7l7 8c1 2-1 4-3 3l-8-8c-4 1-7-1-7-5l4 3 3-1 1-3z" fill="#b9bdc4" stroke="#777d86" /></Svg></button>
        </div>
        <div className="flex flex-1 items-center border-b-2 border-white pl-[5px]">
          <Svg w={18}><rect x="1" y="1" width="16" height="16" rx="1" fill="#a2a8b2" stroke="#8a8f99" strokeWidth="2" /><path d="m4 5 4 4-4 4M9 13h5" stroke="#4a5060" strokeWidth="1.500" /></Svg>
          <Caret w={8} className="ml-1 text-[#777]" />
          <input aria-label="命令" placeholder="键入命令" className="ml-[10px] flex-1 bg-transparent text-[20px] leading-6 italic outline-none placeholder:text-[#808183]" />
        </div>
      </div>
    </div>
  );
}

function LayoutTabs() {
  return (
    <div className="flex h-[21px] border-y border-[#fafafa] bg-[#f0f0f0] text-[15px] leading-[17px]">
      {["M3 1v10M11 1v10L5 6z", "M9 1v10L3 6z", "M3 1v10l6-5z", "M9 1v10M1 1v10l6-5z"].map((d, i) => (
        <button key={i} aria-label="布局导航" className="flex h-[18px] w-[18px] items-center justify-center border-r border-b border-[#a0a0a0]"><Svg w={12}><path d={d} fill="#555" stroke="#555" /></Svg></button>
      ))}
      <button className="relative h-[18px] w-[58px] text-white"><svg className="absolute inset-0" width="58" height="18" aria-hidden="true"><path d="M0 0h58l-6 18H6z" fill="#212830" /></svg><span className="relative">模型</span></button>
      <button className="relative h-[18px] w-[60px] pl-[6px] text-left text-black"><svg className="absolute inset-0" width="60" height="18" fill="none" aria-hidden="true"><path d="M0 17h52l7-17" stroke="#777" /></svg><span className="relative">布局1</span></button>
    </div>
  );
}

/* ---------- dialog ---------- */

const rows = [
  ["大小乔木、灌木、花草密植混种区", "0.7", "30", "50", "1.050", "105.000"],
  ["阔叶大乔木", "0.7", "22.5", "50", "0.788", "78.750"],
  ["阔叶小乔木、针叶乔木、疏叶乔木", "0.7", "15", "50", "0.525", "52.500"],
  ["密植灌木", "0.7", "7.5", "50", "0.263", "26.250"],
  ["草花花圃、自然野草、草坪、水生植物", "0.7", "0.5", "500", "0.175", "17.500"],
];
const cell = "h-5 border-r border-b border-[#008080] p-0 pl-[2px] text-left align-top font-normal";
const Clip = ({ t, className = "" }) => <div className={`h-[19px] overflow-hidden leading-[18px] whitespace-nowrap ${className}`}><Song t={t} /></div>;

function Dialog() {
  const plain = "h-[21px] border border-b-0 border-l-0 border-[#d9d9d9] bg-[#f0f0f0] text-left";
  return (
    <div role="dialog" aria-label="碳排放" className="absolute left-[394px] top-[222px] z-20 flex h-[579px] w-[1131px] flex-col border border-[#44484e] bg-[#f0f0f0] text-[15px] text-black shadow-[0_4px_14px_rgba(0,0,0,0.5)]">
      <div className="flex h-[37px] shrink-0 items-center bg-white pl-[9px] text-[#999]">
        <span className="mr-[6px] flex h-5 w-5 items-center justify-center bg-gradient-to-tr from-[#d8202a] to-[#f7c3c3]"><AcadA w={16} h={17} /></span>碳排放
        <button className="ml-auto mr-[14px]" aria-label="关闭对话框"><Svg w={13}><path d="m1 1 11 11M12 1 1 12" stroke="#8a8a8a" /></Svg></button>
      </div>
      <div className="flex h-[41px] shrink-0 items-center pb-[4px] pl-[12px] leading-5">
        <span className="w-[342px] whitespace-nowrap"><Song t="建筑面积: 1754㎡; 建筑寿命: 100年" /></span>
        <label className="flex items-center gap-[5px]"><input type="checkbox" className="h-4 w-4 appearance-none border border-[#333] bg-white" />单位面积指标</label>
      </div>
      <div className="flex shrink-0 items-end pl-[6px] leading-[19px]">
        <button className={`${plain} w-[100px] border-l pl-[5px]`}>建材生产运输</button>
        <button className={`${plain} w-[99px] pl-[5px]`}>建筑建造拆除</button>
        <button className="h-[23px] w-[63px] border border-b-0 border-l-0 border-[#d9d9d9] bg-white pb-1 pl-[7px] text-left">碳汇</button>
        <button className={`${plain} w-[68px] pl-[4px]`}>建筑运行</button>
        <button className={`${plain} w-[83px] pl-[6px]`}>全生命周期</button>
      </div>
      <div className="mr-[3px] ml-[4px] mb-[7px] flex flex-1 flex-col border border-[#dcdcdc] bg-white pt-px pr-[19px] pb-[16px] pl-[7px]">
        <div className="flex flex-1 flex-col border border-[#646464]">
          <table className="w-full table-fixed border-separate border-spacing-0">
            <colgroup><col className="w-5" /><col className="w-[312px]" /><col className="w-[125px]" /><col className="w-[175px]" /><col className="w-[62px]" /><col className="w-[130px]" /><col className="w-[120px]" /><col /></colgroup>
            <thead>
              <tr className="bg-[#f0f0f0]">
                <th className={cell} />
                {["绿植", "生长期修正因子", "年CO2固定量(kg/㎡·a)", "面积(㎡)", "年碳固定量(tCO2/a)", "碳固定量(tCO2)"].map((h) => <th key={h} className={cell}><Clip t={h} /></th>)}
                <th className="bg-[#f0f0f0]" />
              </tr>
            </thead>
            <tbody>
              {rows.map((r) => (
                <tr key={r[0]}>
                  <td className={`${cell} bg-[#f0f0f0]`} />
                  {r.map((c, i) => <td key={i} className={i ? cell : `${cell} bg-[#f0f0f0]`}><Clip t={c} /></td>)}
                </tr>
              ))}
              <tr>
                <td className={`${cell} bg-[#f0f0f0]`}><Svg w={12} className="mt-[3px] ml-[3px]"><path d="M0 0v12l10-6z" fill="#0000ff" /></Svg></td>
                <td colSpan={4} className={cell}><Clip t="碳汇合计" className="text-center" /></td>
                <td className={cell}><Clip t="2.800" /></td>
                <td className={cell}><Clip t="280.000" /></td>
              </tr>
            </tbody>
          </table>
          <div className="w-5 flex-1 bg-[#f0f0f0]" />
        </div>
      </div>
    </div>
  );
}

/* ---------- status bar ---------- */

const k = "#222";
const st = [
  <g key="0"><path d="M1 7h14M7 1v14" stroke={k} /><circle cx="7" cy="7" r="3" stroke={k} /><path d="M11 8v8" stroke={k} /><rect x="13" y="8" width="3" height="4" stroke={B} /><rect x="9" y="13" width="3" height="3" stroke="#d9481c" /></g>,
  <g key="1"><path d="M1 3h10M1 7h10M1 11h10" stroke={k} strokeDasharray="1 2" /><path d="M14 3v9M1 15h14" stroke={k} strokeDasharray="2 1" /></g>,
  <path d="M1 1h15v15H1zM4 1v15M7 1v15M10 1v15M13 1v15M1 4h15M1 7h15M1 10h15M1 13h15" fill="#fff" stroke={k} key="2" />,
  <path d="M2 0v15h15M2 9h5v6" stroke={k} key="3" />,
  <g stroke={k} key="4"><path d="M3 13 14 3M7 10h9" /><path d="M12 12A5 5 0 1 1 9 4" strokeWidth="1.300" /><path d="M12 6l3 4h-4z" fill={k} /></g>,
  <g key="5"><rect x="3" y="3" width="13" height="13" fill="#fff" stroke="#445" strokeWidth="1.500" /><circle cx="3" cy="3" r="2" fill="#fff" stroke="#e34f1a" strokeWidth="1.300" /></g>,
  <g key="6"><path d="M4 4l3-3h9v9l-3 4H4z" fill="#fff" stroke="#556" /><path d="M4 4h9v10M13 4l3-3" stroke="#556" /><circle cx="3" cy="14" r="2" fill="#fff" stroke="#e34f1a" strokeWidth="1.300" /></g>,
  <path d="M2 13.500 13 3M2 13.500h12M8 8c3 2 3 4 3 6" stroke={k} key="7" />,
  <g key="8"><path d="M3 1v13h13M3 14 12 5" stroke={k} /><path d="m13 0-5 6h3l-1 4 5-6h-3z" fill="#f5a300" /></g>,
  <path d="M1 7.500h10M5.500 3v9M9.500 10.500h6v3h-6z" stroke={k} strokeWidth="1.300" key="9" />,
  <path d="M1 9h10M9 1v13M11 9h5" stroke="#000" strokeWidth="2" key="10" />,
  <g key="11"><rect x="1" y="1" width="15" height="15" fill="#dff0fc" stroke="#1b6fb8" strokeWidth="1.500" /><path d="M3 4h11M3 8h11M3 12h11" stroke="#7fb8e4" strokeWidth="2" strokeDasharray="2 2" /><path d="M5 6h10M5 10h10M5 14h10" stroke="#7fb8e4" strokeWidth="2" strokeDasharray="2 2" /></g>,
  <g key="12"><rect x="5" y="3" width="8" height="11" fill="#fff" stroke={k} strokeWidth="1.500" /><path d="M7 6h5M7 8.500h5M7 11h5" stroke={k} strokeDasharray="1 1" /></g>,
  <g key="13"><path d="M1 4h6M4 1v6" stroke={k} /><path d="M6 5h7v7H6z" fill="#fff" stroke={k} /><path d="M9 8h7v8H9z" fill="#8dc36c" stroke="#2c6a1c" strokeWidth="1.500" /></g>,
  <path d="M6 1h5v5h5v5h-5v5H6v-5H1V6h5z" fill="#fff" stroke={k} key="14" />,
];

function StatusBar() {
  const b = "flex h-full w-[22px] items-center justify-center border-r border-[#666] bg-gradient-to-b from-[#b8b8b8] to-[#9c9c9c]";
  return (
    <div className="flex h-[22px] shrink-0 items-center border-t border-black bg-gradient-to-b from-[#9a9a9a] to-[#777] text-black">
      <div className="flex h-full w-[227px] items-center whitespace-pre bg-gradient-to-b from-[#a6a6a6] to-[#8c8c8c] pl-[6px]">
        <span className={`${MONO} pt-[3px] text-[14px] leading-4`}>1 : 100</span><Caret w={12} className="text-black" />
        <span className={`${MONO} ml-[13px] text-[13px] leading-4`}>255316, 56638 , 0</span>
      </div>
      {st.map((s, i) => <button key={i} aria-label={`状态 ${i + 1}`} className={i === 5 || i === 11 ? "flex h-full w-[22px] items-center justify-center border-r border-[#666] bg-gradient-to-b from-[#f2fbff] to-[#9fd2e4]" : b}><Svg w={17}>{s}</Svg></button>)}
      <div className="ml-auto flex h-full items-center pr-[15px]">
        <button className="h-full w-[37px] border-x border-[#666] bg-[#b4b4b4] pt-[2px] text-[15px] leading-5">模型</button>
        <button className={b} aria-label="布局"><Svg w={16}><path d="M3 1h10v10H3zM1 14h14M6 4v5h5z" fill="#fff" stroke={k} /></Svg></button>
        <button className={b} aria-label="图形"><Svg w={16}><path d="M0 2h7v7H0zM9 2h7v7H9zM1 12h14v2H1z" fill="#fff" stroke={k} /></Svg></button>
        <div className="h-full w-[21px]" />
        <button className="flex h-full w-[60px] items-center gap-[3px] border-x border-[#666] bg-[#ababab] pt-[2px] pl-[3px] text-[15px] leading-4"><Svg w={14}><path d="m1 14 6-12 6 12M7 2v8M3 13l8-3" stroke={k} /></Svg>1:1<Caret w={6} className="text-black" /></button>
        <button className={b} aria-label="注释可见性"><Svg w={16}><path d="m1 14 6-12 6 12" stroke={k} /><circle cx="12" cy="6" r="3" fill="#f9c440" /></Svg></button>
        <button className={b} aria-label="自动缩放"><Svg w={16}><path d="m1 14 6-12 6 12M7 2v8" stroke="#777" /></Svg></button>
        <div className="h-full w-[6px]" />
        <button className={b} aria-label="切换工作空间"><Svg w={16}><circle cx="8" cy="8" r="6" stroke={k} strokeWidth="2" strokeDasharray="3 2" /></Svg></button>
        <button className={b} aria-label="锁定"><Svg w={16}><path d="M2 3h11v10H2zM8 3v10M2 7h11" fill="#fff" stroke={k} /></Svg></button>
        <button className={b} aria-label="硬件加速"><Svg w={16}><circle cx="8" cy="8" r="6" fill="#555" /></Svg></button>
        <button className="h-full w-[280px] overflow-hidden bg-[#ababab] pt-[2px] pl-1 text-left text-[15px] leading-5">基</button>
      </div>
    </div>
  );
}

/* ---------- notification and input bar ---------- */

function WeChat({ w = 52, h = 44 }) {
  return (
    <Svg w={w} h={h} box="0 0 52 44">
      <defs><linearGradient id="wg" x1="0" y1="0" x2="0" y2="1"><stop stopColor="#5ff07e" /><stop offset="1" stopColor="#07c35d" /></linearGradient></defs>
      <path d="M19 1C8 1 0 8 0 17c0 5 3 10 7 12l-2 6 7-3c3 1 5 1 9 1 10 0 17-7 17-16S30 1 19 1z" fill="url(#wg)" />
      <circle cx="12" cy="12" r="2.500" fill="#0a7c3c" /><circle cx="25" cy="12" r="2.500" fill="#0a7c3c" />
      <path d="M36 16c-9 0-15 6-15 13s7 13 15 13c2 0 4 0 6-1l6 3-1-5c3-2 5-6 5-10 0-7-7-13-16-13z" fill="#e7e7e9" />
      <circle cx="31" cy="25" r="2" fill="#7c7c7c" /><circle cx="41" cy="25" r="2" fill="#7c7c7c" />
    </Svg>
  );
}

function Toast() {
  return (
    <div className="absolute bottom-[62px] right-[15px] z-30 flex h-[230px] w-[452px] flex-col rounded-[9px] border border-[#dcdcdc] bg-[#f2f2f2] text-[15px] text-black shadow-lg">
      <div className="flex pt-[23px] pl-[22px]">
        <Svg w={21} className="mt-[3px]"><path d="M1 0h19l1 21H0z" fill="#15cf6c" /><path d="M14 21 20 15l1 6z" fill="#0ea458" /><path d="M6 7c1 5 8 5 9 0" stroke="#fff" strokeWidth="1.800" /></Svg>
        <h2 className="ml-[17px] text-[20px] leading-7 font-bold">微信电脑版 可升级新版本</h2>
        <button className="ml-auto mr-[17px] self-start" aria-label="更多"><Svg w={14}><path d="M1 7h2M6 7h2M11 7h2" stroke="#777" strokeWidth="2" /></Svg></button>
        <button className="mr-[23px] self-start" aria-label="关闭通知"><Svg w={14}><path d="m1 1 12 12M13 1 1 13" stroke="#777" /></Svg></button>
      </div>
      <div className="flex pt-[9px] pl-[60px]">
        <span className="mt-[5px]"><WeChat /></span>
        <div className="ml-[13px] flex flex-col items-start">
          <p className="flex items-center leading-5">版本3.9.8.25<span className="mx-[9px] h-3 w-px bg-[#aaa]" />2023-12-21更新</p>
          <span className="mt-[7px] rounded-sm bg-[#cfe4f7] px-[5px] leading-[21px] text-[#1068c4]">87%的用户已升级</span>
        </div>
      </div>
      <p className="mt-[16px] flex items-center gap-[5px] pl-[60px] leading-6 text-[#6a6a6a]"><Svg w={8}><path d="M4 0l4 4-4 4-4-4z" fill="#555" /></Svg>修复已知问题</p>
      <button className="mr-[40px] ml-[42px] mt-[18px] h-[38px] rounded border border-b-2 border-[#e6e6e6] bg-[#fdfdfd] leading-5">立即升级</button>
    </div>
  );
}

function SogouS({ w }) {
  return (
    <Svg w={w} box="0 0 40 40">
      <rect x="4" y="4" width="33" height="33" rx="5" transform="rotate(-9 20 20)" fill="#f4511e" />
      <text x="20" y="33" textAnchor="middle" fontSize="36" fontWeight="bold" fontFamily="Liberation Sans" fill="#fff" transform="rotate(-6 20 20)">S</text>
    </Svg>
  );
}

function InputBar() {
  const c = "#0f70d8";
  return (
    <div className="absolute bottom-[50px] right-[4px] z-40 flex h-[32px] items-center gap-[6px] border border-[#9fc0e8] bg-white pr-1">
      <span className="-my-2 -ml-[30px]"><SogouS w={42} /></span>
      <span className="w-[20px] text-[20px] leading-6 font-bold text-[#0f70d8]">中</span>
      <span className="flex items-center gap-[10px] pl-[3px]">
        <Svg w={20}><circle cx="6" cy="6" r="2.500" stroke={c} strokeWidth="1.800" /><path d="M12 11a2 2 0 1 1 3 2c0 3-2 4-3 4 1-1 1-2 1-3z" fill={c} stroke={c} /></Svg>
        <Svg w={20}><rect x="6" y="0" width="8" height="12" rx="4" fill={c} /><path d="M3 9c0 9 14 9 14 0M10 15v3M7 19h6" stroke={c} strokeWidth="1.800" /></Svg>
        <Svg w={20}><rect x="1" y="2" width="18" height="16" rx="2" fill={c} /><path d="M3.500 6h13M3.500 9.500h13" stroke="#fff" strokeWidth="2" strokeDasharray="2.200 1.400" /><path d="M4 14h2M7.500 14h5M14 14h2" stroke="#fff" strokeWidth="2" /></Svg>
        <Svg w={20} h={22} className="overflow-visible"><defs><linearGradient id="sh" x1="0" y1="0" x2="1" y2="1"><stop stopColor="#ff7a3c" /><stop offset=".55" stopColor="#c77be8" /><stop offset="1" stopColor="#7bb4f5" /></linearGradient></defs><path d="m5 4 4 2 4-2 6 4-3 4-1-1v10H4V11l-2 1-3-4z" fill="url(#sh)" /><circle cx="18" cy="2" r="4" fill="#f4511e" /></Svg>
        <Svg w={20}><rect x="0" y="6" width="20" height="13" rx="6" fill={c} /><circle cx="10" cy="4" r="2.500" fill={c} /><path d="M4 12h5M6.500 9.500v5" stroke="#fff" strokeWidth="1.500" /><circle cx="14" cy="12" r="2" stroke="#fff" strokeWidth="1.500" /></Svg>
        <Svg w={20}><rect x="2" y="2" width="7" height="7" rx="2" fill={c} /><rect x="11" y="2" width="7" height="7" rx="3.500" fill={c} /><rect x="2" y="11" width="7" height="7" rx="2" fill={c} /><rect x="11" y="11" width="7" height="7" rx="2" fill={c} /></Svg>
        <Svg w={20}><path d="M10 0l2 4 5-1-1 5 4 2-4 3 2 4h-5l-3 3-3-3H2l2-4-4-3 4-2-1-5 5 1z" fill={c} /><circle cx="10" cy="10" r="4.500" fill="#fff" /><path d="M10 8v10" stroke={c} strokeWidth="2" /><circle cx="10" cy="9" r="2" fill={c} /></Svg>
      </span>
    </div>
  );
}

/* ---------- taskbar ---------- */

function AppButton({ children, on, label }) {
  return <button aria-label={label} className={`flex h-full flex-col items-center justify-center border-b-[3px] border-[#0078d7] pt-[3px] ${on ? "w-[61px] bg-[#f4faea]" : "w-[51px]"}`}>{children}</button>;
}

function Taskbar() {
  return (
    <footer className="flex h-[50px] shrink-0 items-center bg-[#e2f3c8] text-black">
      <button className="flex w-[60px] justify-center" aria-label="开始"><Svg w={20}><path d="M0 3l8-1v7.500H0zM9 2l11-2v9.500H9zM0 10.500h8V18l-8-1zM9 10.500h11V20L9 18z" fill="#000" /></Svg></button>
      <label className="flex h-[50px] w-[360px] items-center border border-[#c8c8c8] bg-white pl-[14px]">
        <Svg w={21}><circle cx="13" cy="8" r="6.500" stroke="#111" strokeWidth="1.500" /><path d="m8 13-7 7" stroke="#111" strokeWidth="1.500" /></Svg>
        <input aria-label="搜索" placeholder="搜索" className="ml-[13px] w-[200px] bg-transparent text-[19px] leading-6 outline-none placeholder:text-[#222]" />
        <Svg w={48} h={48} className="ml-[33px]">
          <path d="m38 0 4 5-2 5 3 5-5 4 1 8-4 10-1 11" stroke="#a9803f" strokeWidth="3.500" />
          <path d="m38 0 4 5-2 5 3 5-5 4 1 8-4 10-1 11" stroke="#d8b878" strokeWidth="1.200" />
          <path d="M1 48c1-7 5-9 9-11l10-2 9-5c2 6 13 9 15 18z" fill="#e2d8c8" />
          <path d="M8 16c-1 7-1 14 2 17 3 3 6 4 9 4 6-2 9-8 9-19z" fill="#e8cda9" />
          <path d="M26 15c3 0 5 3 3 9-1 4-4 6-5 9z" fill="#cfc6ba" />
          <path d="M9 2C15-1 28 0 35 6l-5 13C23 13 15 13 9 15c-2-5-1-9 0-13z" fill="#5f453c" />
          <path d="M15 1c2 4 3 8 2 12M24 2c2 4 2 8 0 12" stroke="#8a6e62" />
          <path d="m9 38 8 8 9-13 5 3-9 12H11z" fill="#8c3f1b" />
          <path d="M10 28c3-2 6-2 9 1l-3 1c3 2 2 6 0 9-3-2-5-5-4-8z" fill="#3b2a22" />
          <path d="M9 22h4M17 22h5" stroke="#3a4450" strokeWidth="1.500" />
        </Svg>
      </label>
      <button className="ml-[19px]" aria-label="任务视图"><Svg w={21}><path d="M1 1v3h12V1M1 7h12v7H1zM1 20v-3h12v3" stroke="#000" strokeWidth="1.300" /><path d="M19 1v4M19 12v8" stroke="#000" strokeWidth="1.300" /><path d="M18 7h3v3h-3z" fill="#000" /></Svg></button>
      <span className="mr-[19px] ml-[26px] h-[26px] w-[4px] border-x border-black" />
      <div className="flex h-full gap-[11px]">
        <AppButton label="Edge"><Svg w={32} box="0 0 32 32"><defs><linearGradient id="eg" x1="0" y1="0" x2="1" y2=".4"><stop stopColor="#2bb8f0" /><stop offset="1" stopColor="#62d84a" /></linearGradient></defs><circle cx="16" cy="16" r="15" fill="#0f6cc4" /><path d="M1 15C2 6 9 1 16 1c9 0 15 6 15 13 0 5-4 7-8 7-3 0-5-1-4-3 2-3-1-7-5-7-7 0-12 2-13 4z" fill="url(#eg)" /><path d="M11 14c-2 9 5 15 14 12-5 6-15 6-19-1-3-6 0-10 5-11z" fill="#0c4e9c" /><path d="M13 16c-1 5 4 8 12 7l4-1c2-2 1-2 0-2-6 3-11 1-10-2 1-4-5-6-6-2z" fill="#e2f3c8" /></Svg></AppButton>
        <AppButton label="浏览器"><Svg w={30} box="0 0 30 30"><circle cx="15" cy="15" r="11" stroke="#16a5f0" strokeWidth="6" /><path d="M7 16h20" stroke="#16a5f0" strokeWidth="4" /><path d="M1 22C8 16 18 7 29 6" stroke="#e2f3c8" strokeWidth="2" /><path d="M20 19h8v4h-8z" fill="#e2f3c8" /></Svg></AppButton>
        <AppButton label="文件资源管理器"><Svg w={28} h={24}><path d="M0 0h11l3 3h14v21H0z" fill="#e6a10c" /><path d="M0 5h28v18H0z" fill="#ffd461" /><path d="M5 24V14h18v10h-4v-6H9v6z" fill="#3a8fdc" /></Svg></AppButton>
        <div className="-mx-[5px] h-full"><AppButton label="AutoCAD" on><span className="flex h-[30px] w-[30px] items-center justify-center bg-gradient-to-tr from-[#dc1f28] to-[#fbe9e9]"><AcadA w={22} h={24} /></span></AppButton></div>
        <AppButton label="微信"><WeChat w={31} h={27} /></AppButton>
      </div>
      <div className="ml-auto flex h-full items-center">
        <Svg w={14} h={24}><path d="M4 1v6M10 1v6" stroke="#888" strokeWidth="2.500" /><path d="M1 7h12v4c0 5-3 5-5 6v6H6v-6c-2-1-5-1-5-6z" fill="#fff" stroke="#888" /></Svg>
        <span className="h-[22px] w-[42px] rounded-sm border-2 border-white bg-[#1f9a48] text-center text-[13px] leading-[18px] text-white outline-1 outline-[#888]">100%</span>
        <span className="h-2 w-[4px] bg-white outline-1 outline-[#888]" />
        <button className="ml-[8px]" aria-label="显示隐藏图标"><Svg w={16}><path d="m1 11 7-7 7 7" stroke="#000" strokeWidth="1.500" /></Svg></button>
        <span className="ml-[12px]"><WeChat w={20} h={17} /></span>
        <Svg w={22} className="ml-[9px]"><path d="M9 18H2V4l17-3v11" stroke="#111" strokeWidth="1.300" /><path d="M7 9c2-3 6-3 7 0M14 6v3h-3M14 12c-1 2-4 3-6 1M7 15v-3h3" stroke="#111" /><circle cx="16" cy="17" r="4.500" fill="#2a72c8" /></Svg>
        <Svg w={18} className="ml-[12px]"><path d="M1 17C1 8 8 1 17 1M5 17C5 10 10 5 17 5M9 17c0-5 3-8 8-8M13 17c0-2 2-4 4-4" stroke="#222" strokeWidth="1.300" /><circle cx="16" cy="16" r="1.500" fill="#000" /></Svg>
        <Svg w={21} h={18} className="ml-[10px]"><path d="M1 6h3l5-5v16l-5-5H1z" stroke="#111" strokeWidth="1.300" /><path d="M12 7c1 1 1 3 0 4" stroke="#111" /><path d="M15 4c3 3 3 7 0 10M18 2c4 5 4 9 0 14" stroke="#8a9a78" /></Svg>
        <span className="ml-[9px] text-[18px] leading-6">中</span>
        <span className="ml-[15px]"><SogouS w={22} /></span>
        <div className="ml-[17px] flex w-[84px] flex-col items-center text-[16px] leading-[23px]"><time className="text-[15px]">19:43</time><time>2024/1/8</time></div>
        <button className="relative ml-[17px] mr-[29px]" aria-label="通知"><Svg w={24}><path d="M2 2h20v16H12l-2 3-2-3H2z" fill="#000" /><path d="M6 6h12M6 10h12M6 14h8" stroke="#fff" strokeWidth="1.500" /></Svg><span className="absolute left-[11px] top-[10px] h-5 w-5 rounded-full border border-[#777] bg-[#c9cfc0] text-center text-[14px] leading-[18px] font-bold">1</span></button>
      </div>
    </footer>
  );
}

export default function App() {
  return (
    <div className={`relative flex min-h-screen flex-col overflow-hidden bg-[#f0f0f0] ${UI}`}>
      <TitleBar />
      <RibbonTabs />
      <Ribbon />
      <FileTabs />
      <div className="h-[6px] border-b border-[#9a9a9a] bg-[#656565]" />
      <main className="flex flex-1">
        <Sidebar />
        <div className="mr-px flex flex-1 flex-col border-l border-[#808080]">
          <Canvas />
          <LayoutTabs />
        </div>
      </main>
      <StatusBar />
      <Taskbar />
      <Dialog />
      <Toast />
      <InputBar />
    </div>
  );
}
